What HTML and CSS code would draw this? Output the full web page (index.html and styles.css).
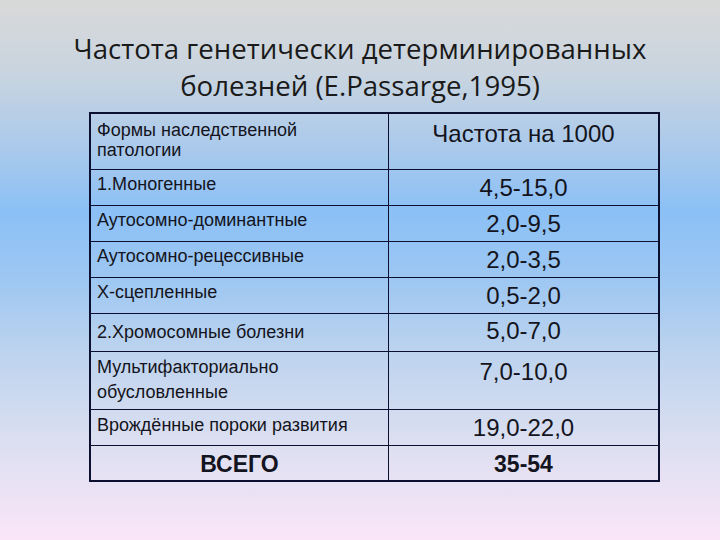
FILE: index.html
```html
<!DOCTYPE html>
<html lang="ru">
<head>
<meta charset="utf-8">
<title>Частота генетически детерминированных болезней</title>
<link rel="stylesheet" href="styles.css">
</head>
<body>
<div class="slide">
  <h1 class="title">Частота генетически детерминированных<br>болезней (E.Passarge,1995)</h1>
  <table class="freq">
    <tr class="r-head">
      <td class="name">Формы наследственной<br>патологии</td>
      <td class="val">Частота на 1000</td>
    </tr>
    <tr class="r36">
      <td class="name">1.Моногенные</td>
      <td class="val">4,5-15,0</td>
    </tr>
    <tr class="r36">
      <td class="name">Аутосомно-доминантные</td>
      <td class="val">2,0-9,5</td>
    </tr>
    <tr class="r36">
      <td class="name">Аутосомно-рецессивные</td>
      <td class="val">2,0-3,5</td>
    </tr>
    <tr class="r36">
      <td class="name">Х-сцепленные</td>
      <td class="val">0,5-2,0</td>
    </tr>
    <tr class="r38">
      <td class="name">2.Хромосомные болезни</td>
      <td class="val">5,0-7,0</td>
    </tr>
    <tr class="r58">
      <td class="name multi">Мультифакториально<br>обусловленные</td>
      <td class="val">7,0-10,0</td>
    </tr>
    <tr class="r36 r-cong">
      <td class="name">Врождённые пороки развития</td>
      <td class="val">19,0-22,0</td>
    </tr>
    <tr class="r36 total">
      <td class="name">ВСЕГО</td>
      <td class="val">35-54</td>
    </tr>
  </table>
</div>
</body>
</html>
```

FILE: styles.css
```css
html, body {
  margin: 0;
  padding: 0;
}
body {
  width: 720px;
  height: 540px;
  overflow: hidden;
  background: linear-gradient(to bottom,
    #d9d9d9 0%,
    #c8d4e0 14%,
    #a9c9ec 28%,
    #8bc0f6 39%,
    #9ec7f2 52%,
    #bcd3ee 65%,
    #dcdff1 82%,
    #fae5f8 100%);
  color: #111;
}
.slide {
  display: flex;
  flex-direction: column;
  align-items: center;
  padding-top: 30px;
}
.title {
  margin: 0;
  font-family: "Open Sans", "DejaVu Sans", sans-serif;
  font-weight: 400;
  font-size: 27.6px;
  line-height: 37px;
  text-align: center;
  color: #1a1a1a;
}
.freq {
  margin-top: 8px;
  margin-left: 29px;
  border-collapse: collapse;
  border: 2px solid #0b1030;
  font-family: "Liberation Sans", Arial, sans-serif;
  color: #141420;
}
.freq td {
  border: 1px solid #0b1030;
  padding: 0 6px;
  vertical-align: top;
}
.name {
  width: 285px;
  font-size: 18px;
  line-height: 20px;
  padding-top: 4px !important;
}
.val {
  width: 257px;
  font-size: 24px;
  line-height: 26px;
  text-align: center;
  padding-top: 5px !important;
}
.r-head { height: 56px; }
.r-head .name { padding-top: 6px !important; }
.r-head .val { padding-top: 7px !important; }
.r36 { height: 36px; }
.r38 { height: 38px; }
.r58 { height: 58px; }
.r38 .name { padding-top: 8px !important; }
.r38 .val { padding-top: 4px !important; }
.multi { line-height: 25px; padding-top: 3px !important; }
.r58 .val { padding-top: 7px !important; }
.r-cong .name { padding-top: 5px !important; }
.total td {
  font-weight: 700;
  text-align: center;
  font-size: 23px;
  line-height: 26px;
  padding-top: 5px !important;
}
```
